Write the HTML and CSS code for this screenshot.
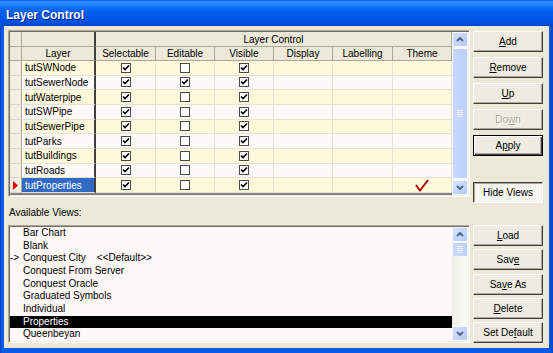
FILE: index.html
```html
<!DOCTYPE html>
<html>
<head>
<meta charset="utf-8">
<link rel="stylesheet" href="styles.css">
</head>
<body>
<div class="window">
  <div class="titlebar">Layer Control</div>
  <div class="client">
    <div class="top">
      <div class="gridbox sunken">
        <div class="table">
          <div class="row h1">
            <div class="hc"></div>
            <div class="hc lay"></div>
            <div class="hc span">Layer Control</div>
          </div>
          <div class="row h2">
            <div class="hc"></div>
            <div class="hc lay">Layer</div>
            <div class="hc">Selectable</div>
            <div class="hc">Editable</div>
            <div class="hc">Visible</div>
            <div class="hc">Display</div>
            <div class="hc">Labelling</div>
            <div class="hc">Theme</div>
          </div>
          <div class="row data y">
            <div class="dc ind"></div><div class="dc lay">tutSWNode</div>
            <div class="dc"><span class="cb"><svg viewBox="0 0 8 8"><path d="M1 3.5 L3 5.5 L7 1.5"/></svg></span></div>
            <div class="dc"><span class="cb"></span></div>
            <div class="dc"><span class="cb"><svg viewBox="0 0 8 8"><path d="M1 3.5 L3 5.5 L7 1.5"/></svg></span></div>
            <div class="dc"></div><div class="dc"></div><div class="dc"></div>
          </div>
          <div class="row data w">
            <div class="dc ind"></div><div class="dc lay">tutSewerNode</div>
            <div class="dc"><span class="cb"><svg viewBox="0 0 8 8"><path d="M1 3.5 L3 5.5 L7 1.5"/></svg></span></div>
            <div class="dc"><span class="cb"><svg viewBox="0 0 8 8"><path d="M1 3.5 L3 5.5 L7 1.5"/></svg></span></div>
            <div class="dc"><span class="cb"><svg viewBox="0 0 8 8"><path d="M1 3.5 L3 5.5 L7 1.5"/></svg></span></div>
            <div class="dc"></div><div class="dc"></div><div class="dc"></div>
          </div>
          <div class="row data y">
            <div class="dc ind"></div><div class="dc lay">tutWaterpipe</div>
            <div class="dc"><span class="cb"><svg viewBox="0 0 8 8"><path d="M1 3.5 L3 5.5 L7 1.5"/></svg></span></div>
            <div class="dc"><span class="cb"></span></div>
            <div class="dc"><span class="cb"><svg viewBox="0 0 8 8"><path d="M1 3.5 L3 5.5 L7 1.5"/></svg></span></div>
            <div class="dc"></div><div class="dc"></div><div class="dc"></div>
          </div>
          <div class="row data w">
            <div class="dc ind"></div><div class="dc lay">tutSWPipe</div>
            <div class="dc"><span class="cb"><svg viewBox="0 0 8 8"><path d="M1 3.5 L3 5.5 L7 1.5"/></svg></span></div>
            <div class="dc"><span class="cb"></span></div>
            <div class="dc"><span class="cb"><svg viewBox="0 0 8 8"><path d="M1 3.5 L3 5.5 L7 1.5"/></svg></span></div>
            <div class="dc"></div><div class="dc"></div><div class="dc"></div>
          </div>
          <div class="row data y">
            <div class="dc ind"></div><div class="dc lay">tutSewerPipe</div>
            <div class="dc"><span class="cb"><svg viewBox="0 0 8 8"><path d="M1 3.5 L3 5.5 L7 1.5"/></svg></span></div>
            <div class="dc"><span class="cb"></span></div>
            <div class="dc"><span class="cb"><svg viewBox="0 0 8 8"><path d="M1 3.5 L3 5.5 L7 1.5"/></svg></span></div>
            <div class="dc"></div><div class="dc"></div><div class="dc"></div>
          </div>
          <div class="row data w">
            <div class="dc ind"></div><div class="dc lay">tutParks</div>
            <div class="dc"><span class="cb"><svg viewBox="0 0 8 8"><path d="M1 3.5 L3 5.5 L7 1.5"/></svg></span></div>
            <div class="dc"><span class="cb"></span></div>
            <div class="dc"><span class="cb"><svg viewBox="0 0 8 8"><path d="M1 3.5 L3 5.5 L7 1.5"/></svg></span></div>
            <div class="dc"></div><div class="dc"></div><div class="dc"></div>
          </div>
          <div class="row data y">
            <div class="dc ind"></div><div class="dc lay">tutBuildings</div>
            <div class="dc"><span class="cb"><svg viewBox="0 0 8 8"><path d="M1 3.5 L3 5.5 L7 1.5"/></svg></span></div>
            <div class="dc"><span class="cb"></span></div>
            <div class="dc"><span class="cb"><svg viewBox="0 0 8 8"><path d="M1 3.5 L3 5.5 L7 1.5"/></svg></span></div>
            <div class="dc"></div><div class="dc"></div><div class="dc"></div>
          </div>
          <div class="row data w">
            <div class="dc ind"></div><div class="dc lay">tutRoads</div>
            <div class="dc"><span class="cb"><svg viewBox="0 0 8 8"><path d="M1 3.5 L3 5.5 L7 1.5"/></svg></span></div>
            <div class="dc"><span class="cb"></span></div>
            <div class="dc"><span class="cb"><svg viewBox="0 0 8 8"><path d="M1 3.5 L3 5.5 L7 1.5"/></svg></span></div>
            <div class="dc"></div><div class="dc"></div><div class="dc"></div>
          </div>
          <div class="row data y">
            <div class="dc ind"><svg width="5" height="9" viewBox="0 0 5 9"><path d="M0 0 L5 4.5 L0 9Z" fill="#E80000"/></svg></div>
            <div class="dc lay sel">tutProperties</div>
            <div class="dc"><span class="cb"><svg viewBox="0 0 8 8"><path d="M1 3.5 L3 5.5 L7 1.5"/></svg></span></div>
            <div class="dc"><span class="cb"></span></div>
            <div class="dc"><span class="cb"><svg viewBox="0 0 8 8"><path d="M1 3.5 L3 5.5 L7 1.5"/></svg></span></div>
            <div class="dc"></div><div class="dc"></div>
            <div class="dc"><svg class="redcheck" width="14" height="13" viewBox="0 0 14 13"><path d="M1 6 L5 11.5 L13 1"/></svg></div>
          </div>
          <div class="fill"></div>
        </div>
        <div class="vs">
          <div class="arrow"><svg width="8" height="5" viewBox="0 0 8 5"><path d="M1 4 L4 1 L7 4"/></svg></div>
          <div class="thumb full"><svg class="grip" width="6" height="7" viewBox="0 0 6 7"><path class="gl" d="M0 0.5H6M0 2.5H6M0 4.5H6M0 6.5H6"/></svg></div>
          <div class="arrow"><svg width="8" height="5" viewBox="0 0 8 5"><path d="M1 1 L4 4 L7 1"/></svg></div>
        </div>
      </div>
      <div class="btncol">
        <div class="btn"><span><u>A</u>dd</span></div>
        <div class="btn"><span><u>R</u>emove</span></div>
        <div class="btn"><span><u>U</u>p</span></div>
        <div class="btn dis"><span>Do<u>w</u>n</span></div>
        <div class="btn def"><span>A<u>p</u>ply</span></div>
        <div class="btn pressed"><span>Hide Views</span></div>
      </div>
    </div>
    <div class="label">Available Views:</div>
    <div class="bottom">
      <div class="listbox sunken">
        <ul class="list">
          <li><span class="mk"></span>Bar Chart</li>
          <li><span class="mk"></span>Blank</li>
          <li><span class="mk">-&gt;</span>Conquest City<span class="dflt">&lt;&lt;Default&gt;&gt;</span></li>
          <li><span class="mk"></span>Conquest From Server</li>
          <li><span class="mk"></span>Conquest Oracle</li>
          <li><span class="mk"></span>Graduated Symbols</li>
          <li><span class="mk"></span>Individual</li>
          <li class="sel"><span class="mk"></span>Properties</li>
          <li><span class="mk"></span>Queenbeyan</li>
        </ul>
        <div class="vs">
          <div class="arrow"><svg width="8" height="5" viewBox="0 0 8 5"><path d="M1 4 L4 1 L7 4"/></svg></div>
          <div class="thumb small"><svg class="grip" width="6" height="7" viewBox="0 0 6 7"><path class="gl" d="M0 0.5H6M0 2.5H6M0 4.5H6M0 6.5H6"/></svg></div>
          <div class="track"></div>
          <div class="arrow"><svg width="8" height="5" viewBox="0 0 8 5"><path d="M1 1 L4 4 L7 1"/></svg></div>
        </div>
      </div>
      <div class="btncol lower">
        <div class="btn"><span><u>L</u>oad</span></div>
        <div class="btn"><span>Sav<u>e</u></span></div>
        <div class="btn"><span>Sa<u>v</u>e As</span></div>
        <div class="btn"><span><u>D</u>elete</span></div>
        <div class="btn"><span>Set De<u>f</u>ault</span></div>
      </div>
    </div>
  </div>
</div>
</body>
</html>
```

FILE: styles.css
```css
* { box-sizing: border-box; }
html, body { margin: 0; padding: 0; }
body {
  width: 553px;
  height: 353px;
  overflow: hidden;
  font-family: "Liberation Sans", Arial, sans-serif;
  font-size: 10px;
  color: #000;
  background: #0752E0;
}
.window {
  width: 553px;
  height: 353px;
  display: flex;
  flex-direction: column;
  background: linear-gradient(to right, #0841C8 0, #0A5BEA 2px, #0A5BEA 549px, #0843C8 553px);
}
.titlebar {
  flex: none;
  height: 26px;
  padding: 4px 0 0 6px;
  line-height: 22px;
  font-size: 12px;
  font-weight: bold;
  color: #fff;
  text-shadow: 1px 1px #0A1E8C;
  background: linear-gradient(to bottom, #0058EE 0, #3A93FF 2px, #2586FF 4px, #0C6CF5 8px, #035EEB 13px, #0057E6 18px, #0052DF 22px, #0049D2 25px, #0044C8 26px);
}
.client {
  flex: 1;
  margin: 0 4px 5px 4px;
  background: #ECE9D8;
  padding: 4px 6px 5px 4px;
  display: flex;
  flex-direction: column;
}
.top {
  display: flex;
  gap: 3px;
  height: 173px;
  align-items: flex-start;
}
.sunken {
  border: 1px solid;
  border-color: #ACA899 #FFFFFF #FFFFFF #ACA899;
  box-shadow: inset 1px 1px #716F64, inset -1px -1px #F1EFE2;
  padding: 1px;
}
.gridbox {
  width: 462px;
  height: 167px;
  display: flex;
}
.table {
  width: 442px;
  display: flex;
  flex-direction: column;
  background: #808080;
}
.row {
  display: grid;
  grid-template-columns: 12px 74px 60px 59px 59px 59px 60px 59px;
}
.h1 { height: 15px; }
.h2 { height: 14px; }
.hc {
  background: #ECE9D8;
  border-right: 1px solid #ACA899;
  border-bottom: 1px solid #ACA899;
  display: flex;
  align-items: center;
  justify-content: center;
  white-space: nowrap;
}
.hc.lay { border-right: 2px solid #404040; }
.hc.span { grid-column: 3 / span 6; }
.data { height: 14.67px; }
.dc {
  border-right: 1px solid #E6E2D6;
  border-bottom: 1px solid #E6E2D6;
  display: flex;
  align-items: center;
  justify-content: center;
  white-space: nowrap;
}
.row.y .dc { background: #FFF8DB; }
.row.w .dc { background: #FFF9F8; }
.row .dc.ind {
  background: #F2EFE2;
  border-right-color: #ACA899;
  border-bottom-color: #DAD6C8;
  justify-content: center;
}
.dc.lay {
  justify-content: flex-start;
  padding-left: 3px;
  border-right: 2px solid #404040;
}
.row .dc.sel { background: #316AC5; color: #fff; }
.cb {
  width: 10px;
  height: 10px;
  border: 1px solid #4A4A4A;
  background: #fff;
  display: flex;
  align-items: center;
  justify-content: center;
}
.cb svg { width: 8px; height: 8px; }
.cb path { fill: none; stroke: #000; stroke-width: 1.6; }
.redcheck path { fill: none; stroke: #A80000; stroke-width: 1.8; }
.fill { flex: 1; background: #808080; }

.vs {
  width: 16px;
  display: flex;
  flex-direction: column;
  background: linear-gradient(to right, #EEEDE5, #FDFDFA);
}
.arrow {
  flex: none;
  height: 15px;
  border: 1px solid #F4F7FE;
  border-radius: 2px;
  background: linear-gradient(135deg, #D6E2FD, #B6CAF6);
  display: flex;
  align-items: center;
  justify-content: center;
}
.arrow path { fill: none; stroke: #4D6185; stroke-width: 1.8; }
.thumb {
  border: 1px solid #F4F7FE;
  border-radius: 2px;
  background: linear-gradient(to right, #C9D8FC, #BCCFFA);
  display: flex;
  align-items: center;
  justify-content: center;
}
.thumb.full { flex: 1; margin: 1px 0; }
.thumb.small { height: 15px; flex: none; }
.grip path { stroke: #EEF3FE; stroke-width: 1; }
.track { flex: 1; }

.btncol {
  width: 70px;
  display: flex;
  flex-direction: column;
  gap: 5px;
  margin-top: 1px;
}
.btn {
  height: 21px;
  flex: none;
  display: flex;
  align-items: center;
  justify-content: center;
  background: #EEECE2;
  border: 1px solid;
  border-color: #FFFFFF #404040 #404040 #FFFFFF;
  box-shadow: inset -1px -1px #ACA899;
  white-space: nowrap;
}
.btn.def {
  border-color: #000;
  box-shadow: inset 1px 1px #fff, inset -1px -1px #404040, inset -2px -2px #ACA899;
}
.btn.dis { color: #ACA899; text-shadow: 1px 1px #fff; }
.btn.pressed {
  margin-top: 21px;
  border-color: #404040 #FFFFFF #FFFFFF #404040;
  box-shadow: inset 1px 1px #ACA899;
  background: #F6F5EF;
}
.label {
  height: 22px;
  padding: 4px 0 0 1px;
  line-height: 12px;
}
.bottom {
  display: flex;
  gap: 3px;
  height: 118px;
}
.listbox {
  width: 462px;
  height: 118px;
  display: flex;
}
.list {
  flex: 1;
  margin: 0;
  padding: 0;
  list-style: none;
  overflow: hidden;
  background: #FFF8F8;
}
.list li {
  height: 12.67px;
  line-height: 12.67px;
  display: flex;
  white-space: pre;
}
.list li.sel { background: #000; color: #fff; }
.mk { width: 13px; flex: none; }
.dflt { margin-left: 11px; }
.btncol.lower {
  gap: 3.25px;
  margin-top: 0;
}
```
